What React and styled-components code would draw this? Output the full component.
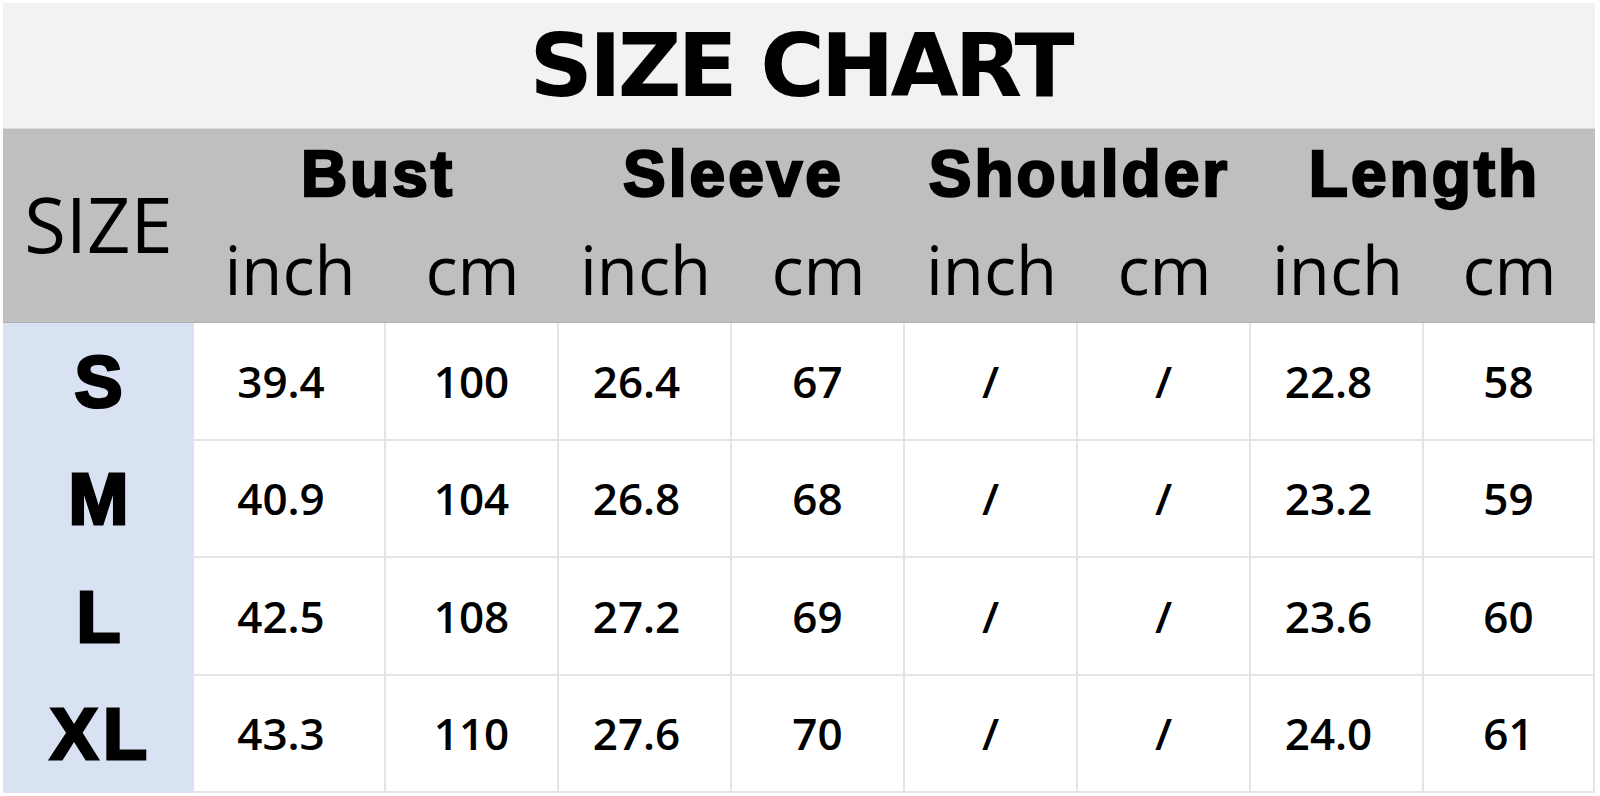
import React from 'react'
import styled, { createGlobalStyle } from 'styled-components'

const GlobalStyle = createGlobalStyle`
  body {
    margin: 0;
    background: #ffffff;
  }
`

// size col, bust inch (a bit wider), then the rest
const COLS = '191px 192px repeat(6, 173px) 1fr'

const groups = ['Bust', 'Sleeve', 'Shoulder', 'Length']

const rows = [
  { size: 'S', values: ['39.4', '100', '26.4', '67', '/', '/', '22.8', '58'] },
  { size: 'M', values: ['40.9', '104', '26.8', '68', '/', '/', '23.2', '59'] },
  { size: 'L', values: ['42.5', '108', '27.2', '69', '/', '/', '23.6', '60'] },
  { size: 'XL', values: ['43.3', '110', '27.6', '70', '/', '/', '24.0', '61'] },
]

export default function App() {
  return (
    <>
      <GlobalStyle />
      <Sheet>
        <Title>SIZE CHART</Title>
        <HeaderGrid>
          <SizeHead>SIZE</SizeHead>
          {groups.map(g => (
            <GroupHead key={g}>{g}</GroupHead>
          ))}
          {groups.map(g => (
            <React.Fragment key={g + '-u'}>
              <UnitHead>inch</UnitHead>
              <UnitHead>cm</UnitHead>
            </React.Fragment>
          ))}
        </HeaderGrid>
        <BodyGrid>
          {rows.map(r => (
            <React.Fragment key={r.size}>
              <SizeCell>{r.size}</SizeCell>
              {r.values.map((v, i) => (
                <ValueCell key={i} $inch={i % 2 === 0 && v !== '/'}>
                  {v}
                </ValueCell>
              ))}
            </React.Fragment>
          ))}
        </BodyGrid>
      </Sheet>
    </>
  )
}

const Sheet = styled.div`
  width: 1592px;
  margin: 3px 0 0 3px;
  display: flex;
  flex-direction: column;
  color: #000;
`

const Title = styled.div`
  height: 126px;
  background: #f2f2f2;
  border-bottom: 1px solid #dcdcdc;
  box-sizing: border-box;
  display: flex;
  align-items: center;
  justify-content: center;
  padding-left: 2px;
  font-family: "Comic Sans MS", "DejaVu Sans", sans-serif;
  font-weight: 700;
  font-size: 88px;
  letter-spacing: -4px;
  line-height: 1;
`

const HeaderGrid = styled.div`
  display: grid;
  grid-template-columns: ${COLS};
  grid-template-rows: 97px 96px;
  background: #bfbfbf;
  border-bottom: 1px solid #b0b0b0;
`

const SizeHead = styled.div`
  grid-row: span 2;
  display: flex;
  align-items: center;
  justify-content: center;
  padding-bottom: 4px;
  font-family: "Open Sans", "Noto Sans", sans-serif;
  font-weight: 500;
  font-size: 76px;
  line-height: 1;
`

const GroupHead = styled.div`
  grid-column: span 2;
  display: flex;
  align-items: center;
  justify-content: center;
  padding: 0 0 8px 3px;
  font-family: "Liberation Sans", Arial, sans-serif;
  font-weight: 700;
  font-size: 64px;
  letter-spacing: 3px;
  -webkit-text-stroke: 2.4px #000;
  line-height: 1;
`

const UnitHead = styled.div`
  display: flex;
  align-items: center;
  justify-content: center;
  padding-bottom: 10px;
  font-family: "Open Sans", "Noto Sans", sans-serif;
  font-weight: 500;
  font-size: 67px;
  line-height: 1;
`

const BodyGrid = styled.div`
  display: grid;
  grid-template-columns: ${COLS};
  grid-template-rows: repeat(4, 1fr);
  height: 470px;
`

const SizeCell = styled.div`
  background: #d9e2f3;
  display: flex;
  align-items: center;
  justify-content: center;
  padding-left: 5px;
  font-family: "Liberation Sans", Arial, sans-serif;
  font-weight: 700;
  font-size: 72px;
  letter-spacing: 5px;
  -webkit-text-stroke: 3px #000;
  line-height: 1;
`

const ValueCell = styled.div`
  display: flex;
  align-items: center;
  justify-content: center;
  padding-right: ${p => (p.$inch ? '16px' : '0')};
  border-right: 2px solid #e4e4e4;
  border-bottom: 2px solid #e4e4e4;
  font-family: "Open Sans", "Noto Sans", sans-serif;
  font-weight: 600;
  font-size: 44px;
  line-height: 1;
`
